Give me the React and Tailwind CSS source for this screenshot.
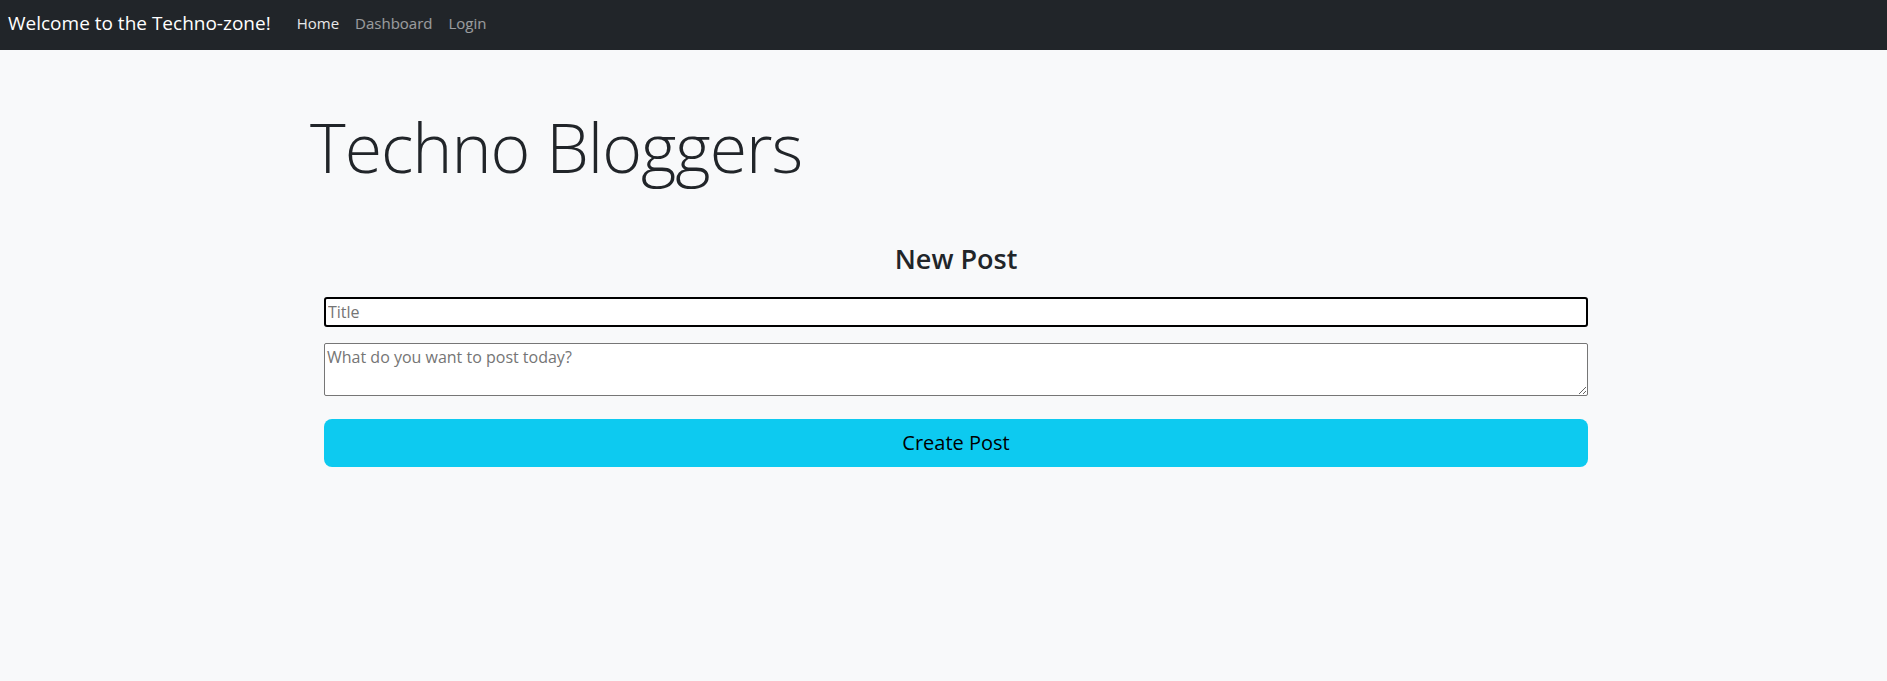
import React, { useState } from "react";

export default function App() {
  const [title, setTitle] = useState("");
  const [body, setBody] = useState("");

  return (
    <div className="min-h-screen bg-[#f8f9fa] font-['Open_Sans','Noto_Sans',sans-serif] text-[#212529]">
      {/* Navbar */}
      <nav className="h-[50px] bg-[#212529] flex items-center px-2 pb-[4px]">
        <span className="text-[19px] text-white mr-[18px]">Welcome to the Techno-zone!</span>
        <a href="#" className="px-2 text-[15px] text-white/90">Home</a>
        <a href="#" className="px-2 text-[15px] text-white/55">Dashboard</a>
        <a href="#" className="px-2 text-[15px] text-white/55">Login</a>
      </nav>

      <main className="pl-[310px] pt-[56px]">
        <h1 className="text-[68px] font-light leading-[1.2] tracking-[-1px]">Techno Bloggers</h1>

        {/* New post form */}
        <form
          className="ml-[14px] w-[1264px] mt-[55px]"
          onSubmit={(e) => e.preventDefault()}
        >
          <h3 className="text-[27px] font-semibold text-center leading-[1.2] mb-[22px]">New Post</h3>
          <input
            type="text"
            placeholder="Title"
            value={title}
            onChange={(e) => setTitle(e.target.value)}
            className="block w-full h-[30px] px-[2px] bg-white border-2 border-black rounded-[3px] text-[16px] placeholder:text-[#757575] outline-none"
          />
          <textarea
            placeholder="What do you want to post today?"
            value={body}
            onChange={(e) => setBody(e.target.value)}
            className="block w-full h-[53px] mt-[16px] px-[2px] py-[1px] bg-white border border-[#767676] rounded-[2px] text-[16px] placeholder:text-[#757575]"
          ></textarea>
          <button
            type="submit"
            className="block w-full h-[48px] mt-[23px] bg-[#0dcaf0] rounded-[8px] text-[20px] text-black"
          >
            Create Post
          </button>
        </form>
      </main>
    </div>
  );
}
